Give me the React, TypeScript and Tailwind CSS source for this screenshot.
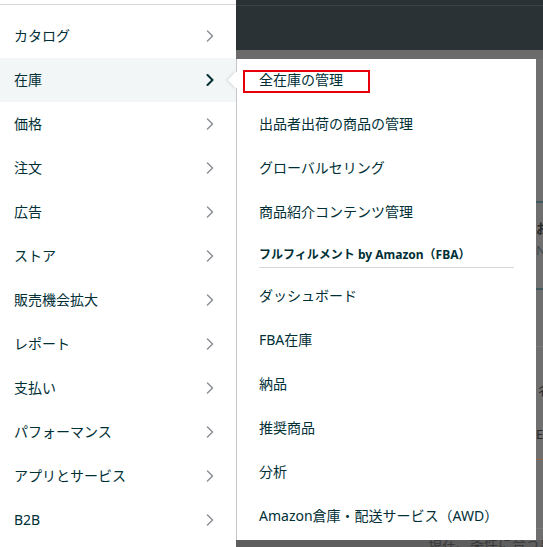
const mainItems = [
  'カタログ',
  '在庫',
  '価格',
  '注文',
  '広告',
  'ストア',
  '販売機会拡大',
  'レポート',
  '支払い',
  'パフォーマンス',
  'アプリとサービス',
  'B2B',
];

const topSubItems = ['全在庫の管理', '出品者出荷の商品の管理', 'グローバルセリング', '商品紹介コンテンツ管理'];
const fbaItems = ['ダッシュボード', 'FBA在庫', '納品', '推奨商品', '分析', 'Amazon倉庫・配送サービス（AWD）'];

function Chevron({ active }: { active: boolean }) {
  return (
    <svg width="8" height="12" viewBox="0 0 8 12" fill="none">
      <polyline
        points="1.5,1 6.5,6 1.5,11"
        stroke={active ? '#002f36' : '#8d9096'}
        strokeWidth={active ? 2 : 1.5}
        strokeLinecap="round"
        strokeLinejoin="round"
      />
    </svg>
  );
}

export default function App() {
  return (
    <div className="w-[543px] h-[547px] overflow-hidden flex bg-[#6b6b6b] font-['Noto_Sans','Noto_Sans_CJK_JP',sans-serif] text-[#002f36]">
      {/* Left main menu */}
      <div className="w-[236px] shrink-0 bg-white flex flex-col">
        <div className="h-[4px]" />
        <div className="border-t border-[#d5d9d9] pt-[9px]">
          {mainItems.map((label, i) => (
            <div
              key={label}
              className={`h-[44px] flex items-center justify-between pl-[14px] pr-[22px] text-[14px] ${
                i === 1 ? 'bg-[#f3f6f6]' : ''
              }`}
            >
              <span className="pb-[2px]">{label}</span>
              <Chevron active={i === 1} />
            </div>
          ))}
        </div>
      </div>

      {/* Right side: dimmed page behind submenu */}
      <div className="flex-1 flex flex-col">
        <div className="h-[50px] bg-[#2b3236] flex flex-col">
          <div className="h-[5px]" />
          <div className="h-px bg-[#3b4246]" />
        </div>
        <div className="h-[9px] bg-[#6b6b6b]" />
        <div className="flex h-[481px]">
          {/* Submenu */}
          <div className="relative w-[300px] shrink-0 bg-white border-l border-[#c4c7c7] flex flex-col">
            <div className="absolute left-[-7px] top-[15px] w-[12px] h-[12px] rotate-45 bg-white shadow-[-1px_1px_2px_rgba(0,0,0,0.12)]" />
            {topSubItems.map((label, i) => (
              <div key={label} className="relative h-[44px] flex items-center px-[22px] text-[14px]">
                {i === 0 && (
                  <div className="absolute left-[6px] top-[11px] w-[127px] h-[23px] border-2 border-[#e5000b]" />
                )}
                <span className="relative pb-[3px]">{label}</span>
              </div>
            ))}
            <div className="px-[22px] pt-[12px]">
              <div className="pb-[4px] border-b border-[#d5d9d9] text-[12px] font-bold leading-[16px]">
                フルフィルメント by Amazon（FBA）
              </div>
            </div>
            <div className="h-[6px]" />
            {fbaItems.map((label) => (
              <div key={label} className="h-[44px] flex items-center px-[22px] text-[14px]">
                <span className="pb-[2px]">{label}</span>
              </div>
            ))}
          </div>

          {/* Dimmed page fragments at the right edge */}
          <div className="flex-1 overflow-hidden bg-[#6f6f6f] flex flex-col text-[#2a2a2a] text-[13px]">
            <div className="h-[142px]" />
            <div className="h-[2px] bg-[#3e5a5e]" />
            <div className="h-[18px]" />
            <div className="leading-[14px] font-bold whitespace-nowrap">お</div>
            <div className="h-[8px]" />
            <div className="leading-[14px] text-[#3e4a4e] whitespace-nowrap">N</div>
            <div className="h-[31px]" />
            <div className="h-[2px] bg-[#3e5a5e]" />
            <div className="h-[56px]" />
            <div className="h-px bg-[#7a7a7a]" />
            <div className="h-[36px]" />
            <div className="leading-[14px] whitespace-nowrap">彳</div>
            <div className="h-[30px]" />
            <div className="leading-[14px] whitespace-nowrap">E</div>
            <div className="h-[18px]" />
            <div className="h-px bg-[#8a6a4a]" />
            <div className="h-[68px]" />
            <div className="h-px bg-[#7a7a7a]" />
          </div>
        </div>
        <div className="flex-1 bg-[#5e5e5e] overflow-hidden pl-[192px]">
          <div className="text-[14px] leading-[16px] mt-[-4px] text-[#3a3a3a] whitespace-nowrap">現在、条件に合う出品</div>
        </div>
      </div>
    </div>
  );
}
